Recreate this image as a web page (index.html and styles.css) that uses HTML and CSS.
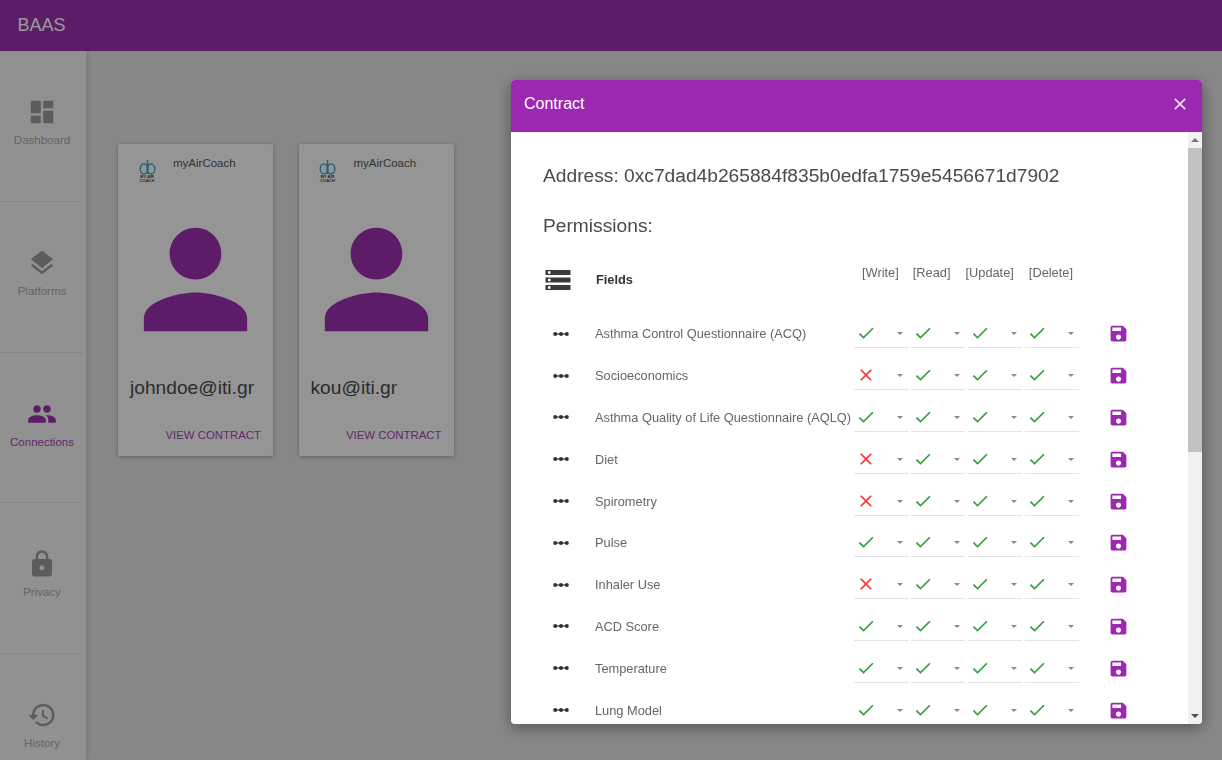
FILE: index.html
```html
<!DOCTYPE html>
<html lang="en">
<head>
  <meta charset="UTF-8" />
  <title>BAAS</title>
  <link rel="stylesheet" href="styles.css">
</head>
<body>
  <svg class="sprites" width="0" height="0">
    <symbol id="i-dashboard" viewBox="0 0 24 24"><path d="M3 13h8V3H3v10zm0 8h8v-6H3v6zm10 0h8V11h-8v10zm0-18v6h8V3h-8z"/></symbol>
    <symbol id="i-layers" viewBox="0 0 24 24"><path d="M11.99 18.54l-7.37-5.73L3 14.07l9 7 9-7-1.63-1.27-7.38 5.74zM12 16l7.36-5.73L21 9l-9-7-9 7 1.63 1.27L12 16z"/></symbol>
    <symbol id="i-people" viewBox="0 0 24 24"><path d="M16 11c1.66 0 2.99-1.34 2.99-3S17.66 5 16 5c-1.66 0-3 1.34-3 3s1.34 3 3 3zm-8 0c1.66 0 2.99-1.34 2.99-3S9.66 5 8 5C6.34 5 5 6.34 5 8s1.34 3 3 3zm0 2c-2.33 0-7 1.17-7 3.5V19h14v-2.5c0-2.33-4.67-3.5-7-3.5zm8 0c-.29 0-.62.02-.97.05 1.16.84 1.97 1.97 1.97 3.45V19h6v-2.5c0-2.33-4.67-3.5-7-3.5z"/></symbol>
    <symbol id="i-lock" viewBox="0 0 24 24"><path d="M18 8h-1V6c0-2.76-2.24-5-5-5S7 3.24 7 6v2H6c-1.1 0-2 .9-2 2v10c0 1.1.9 2 2 2h12c1.1 0 2-.9 2-2V10c0-1.1-.9-2-2-2zm-6 9c-1.1 0-2-.9-2-2s.9-2 2-2 2 .9 2 2-.9 2-2 2zm3.1-9H8.9V6c0-1.71 1.39-3.1 3.1-3.1 1.71 0 3.1 1.39 3.1 3.1v2z"/></symbol>
    <symbol id="i-history" viewBox="0 0 24 24"><path d="M13 3c-4.97 0-9 4.03-9 9H1l3.89 3.89.07.14L9 12H6c0-3.87 3.13-7 7-7s7 3.13 7 7-3.13 7-7 7c-1.93 0-3.68-.79-4.94-2.06l-1.42 1.42C8.27 19.99 10.51 21 13 21c4.97 0 9-4.03 9-9s-4.03-9-9-9zm-1 5v5l4.28 2.54.72-1.21-3.5-2.08V8H12z"/></symbol>
    <symbol id="i-person" viewBox="0 0 24 24"><path d="M12 12c2.21 0 4-1.79 4-4s-1.79-4-4-4-4 1.79-4 4 1.79 4 4 4zm0 2c-2.67 0-8 1.34-8 4v2h16v-2c0-2.66-5.33-4-8-4z"/></symbol>
    <symbol id="i-close" viewBox="0 0 24 24"><path d="M19 6.41L17.59 5 12 10.59 6.41 5 5 6.41 10.59 12 5 17.59 6.41 19 12 13.41 17.59 19 19 17.59 13.41 12z"/></symbol>
    <symbol id="i-check" viewBox="0 0 24 24"><path d="M9 16.17L4.83 12l-1.42 1.41L9 19 21 7l-1.41-1.41z"/></symbol>
    <symbol id="i-save" viewBox="0 0 24 24"><path d="M17 3H5c-1.11 0-2 .9-2 2v14c0 1.1.89 2 2 2h14c1.1 0 2-.9 2-2V7l-4-4zm-5 16c-1.66 0-3-1.34-3-3s1.34-3 3-3 3 1.34 3 3-1.34 3-3 3zm3-10H5V5h10v4z"/></symbol>
    <symbol id="i-storage" viewBox="0 0 24 24"><path d="M2 20h20v-4H2v4zm2-3h2v2H4v-2zM2 4v4h20V4H2zm4 3H4V5h2v2zm-4 7h20v-4H2v4zm2-3h2v2H4v-2z"/></symbol>
    <symbol id="i-dots" viewBox="0 0 16 4"><rect x="1" y="1.400" width="14" height="1.200"/><circle cx="2.200" cy="2" r="2"/><circle cx="8" cy="2" r="2"/><circle cx="13.800" cy="2" r="2"/></symbol>
    <symbol id="i-logo" viewBox="0 0 17 16"><ellipse cx="5" cy="10" rx="3.800" ry="5"/><ellipse cx="12" cy="10" rx="3.800" ry="5"/><path d="M8.500 1v14"/></symbol>
  </svg>

  <header class="topbar">
    <div class="brand">BAAS</div>
  </header>

  <div class="layout">
    <nav class="sidebar">
      <a class="nav-item"><svg class="nav-icon"><use href="#i-dashboard"/></svg><span>Dashboard</span></a>
      <a class="nav-item"><svg class="nav-icon"><use href="#i-layers"/></svg><span>Platforms</span></a>
      <a class="nav-item active"><svg class="nav-icon"><use href="#i-people"/></svg><span>Connections</span></a>
      <a class="nav-item"><svg class="nav-icon"><use href="#i-lock"/></svg><span>Privacy</span></a>
      <a class="nav-item"><svg class="nav-icon"><use href="#i-history"/></svg><span>History</span></a>
    </nav>

    <main class="content">
      <div class="card">
        <div class="card-head">
          <div class="logo">
            <svg class="logo-mark"><use href="#i-logo"/></svg>
            <span class="logo-text">MY AIR COACH</span>
          </div>
          <span class="card-title">myAirCoach</span>
        </div>
        <svg class="avatar"><use href="#i-person"/></svg>
        <div class="card-email">johndoe@iti.gr</div>
        <a class="card-link">VIEW CONTRACT</a>
      </div>
      <div class="card">
        <div class="card-head">
          <div class="logo">
            <svg class="logo-mark"><use href="#i-logo"/></svg>
            <span class="logo-text">MY AIR COACH</span>
          </div>
          <span class="card-title">myAirCoach</span>
        </div>
        <svg class="avatar"><use href="#i-person"/></svg>
        <div class="card-email">kou@iti.gr</div>
        <a class="card-link">VIEW CONTRACT</a>
      </div>
    </main>
  </div>

  <div class="backdrop"></div>

  <section class="modal">
    <div class="modal-head">
      <span>Contract</span>
      <svg class="modal-close"><use href="#i-close"/></svg>
    </div>
    <div class="modal-body">
      <div class="modal-scroll">
        <p class="address">Address: 0xc7dad4b265884f835b0edfa1759e5456671d7902</p>
        <p class="permissions">Permissions:</p>

        <div class="fields-head">
          <svg class="storage-icon"><use href="#i-storage"/></svg>
          <span class="fields-title">Fields</span>
          <div class="col-names">
            <span>[Write]</span><span>[Read]</span><span>[Update]</span><span>[Delete]</span>
          </div>
        </div>

        <div class="row">
          <svg class="dots"><use href="#i-dots"/></svg>
          <span class="field-name">Asthma Control Questionnaire (ACQ)</span>
          <div class="pick"><svg class="yes"><use href="#i-check"/></svg></div>
          <div class="pick"><svg class="yes"><use href="#i-check"/></svg></div>
          <div class="pick"><svg class="yes"><use href="#i-check"/></svg></div>
          <div class="pick"><svg class="yes"><use href="#i-check"/></svg></div>
          <svg class="save"><use href="#i-save"/></svg>
        </div>
        <div class="row">
          <svg class="dots"><use href="#i-dots"/></svg>
          <span class="field-name">Socioeconomics</span>
          <div class="pick"><svg class="no"><use href="#i-close"/></svg></div>
          <div class="pick"><svg class="yes"><use href="#i-check"/></svg></div>
          <div class="pick"><svg class="yes"><use href="#i-check"/></svg></div>
          <div class="pick"><svg class="yes"><use href="#i-check"/></svg></div>
          <svg class="save"><use href="#i-save"/></svg>
        </div>
        <div class="row">
          <svg class="dots"><use href="#i-dots"/></svg>
          <span class="field-name">Asthma Quality of Life Questionnaire (AQLQ)</span>
          <div class="pick"><svg class="yes"><use href="#i-check"/></svg></div>
          <div class="pick"><svg class="yes"><use href="#i-check"/></svg></div>
          <div class="pick"><svg class="yes"><use href="#i-check"/></svg></div>
          <div class="pick"><svg class="yes"><use href="#i-check"/></svg></div>
          <svg class="save"><use href="#i-save"/></svg>
        </div>
        <div class="row">
          <svg class="dots"><use href="#i-dots"/></svg>
          <span class="field-name">Diet</span>
          <div class="pick"><svg class="no"><use href="#i-close"/></svg></div>
          <div class="pick"><svg class="yes"><use href="#i-check"/></svg></div>
          <div class="pick"><svg class="yes"><use href="#i-check"/></svg></div>
          <div class="pick"><svg class="yes"><use href="#i-check"/></svg></div>
          <svg class="save"><use href="#i-save"/></svg>
        </div>
        <div class="row">
          <svg class="dots"><use href="#i-dots"/></svg>
          <span class="field-name">Spirometry</span>
          <div class="pick"><svg class="no"><use href="#i-close"/></svg></div>
          <div class="pick"><svg class="yes"><use href="#i-check"/></svg></div>
          <div class="pick"><svg class="yes"><use href="#i-check"/></svg></div>
          <div class="pick"><svg class="yes"><use href="#i-check"/></svg></div>
          <svg class="save"><use href="#i-save"/></svg>
        </div>
        <div class="row">
          <svg class="dots"><use href="#i-dots"/></svg>
          <span class="field-name">Pulse</span>
          <div class="pick"><svg class="yes"><use href="#i-check"/></svg></div>
          <div class="pick"><svg class="yes"><use href="#i-check"/></svg></div>
          <div class="pick"><svg class="yes"><use href="#i-check"/></svg></div>
          <div class="pick"><svg class="yes"><use href="#i-check"/></svg></div>
          <svg class="save"><use href="#i-save"/></svg>
        </div>
        <div class="row">
          <svg class="dots"><use href="#i-dots"/></svg>
          <span class="field-name">Inhaler Use</span>
          <div class="pick"><svg class="no"><use href="#i-close"/></svg></div>
          <div class="pick"><svg class="yes"><use href="#i-check"/></svg></div>
          <div class="pick"><svg class="yes"><use href="#i-check"/></svg></div>
          <div class="pick"><svg class="yes"><use href="#i-check"/></svg></div>
          <svg class="save"><use href="#i-save"/></svg>
        </div>
        <div class="row">
          <svg class="dots"><use href="#i-dots"/></svg>
          <span class="field-name">ACD Score</span>
          <div class="pick"><svg class="yes"><use href="#i-check"/></svg></div>
          <div class="pick"><svg class="yes"><use href="#i-check"/></svg></div>
          <div class="pick"><svg class="yes"><use href="#i-check"/></svg></div>
          <div class="pick"><svg class="yes"><use href="#i-check"/></svg></div>
          <svg class="save"><use href="#i-save"/></svg>
        </div>
        <div class="row">
          <svg class="dots"><use href="#i-dots"/></svg>
          <span class="field-name">Temperature</span>
          <div class="pick"><svg class="yes"><use href="#i-check"/></svg></div>
          <div class="pick"><svg class="yes"><use href="#i-check"/></svg></div>
          <div class="pick"><svg class="yes"><use href="#i-check"/></svg></div>
          <div class="pick"><svg class="yes"><use href="#i-check"/></svg></div>
          <svg class="save"><use href="#i-save"/></svg>
        </div>
        <div class="row">
          <svg class="dots"><use href="#i-dots"/></svg>
          <span class="field-name">Lung Model</span>
          <div class="pick"><svg class="yes"><use href="#i-check"/></svg></div>
          <div class="pick"><svg class="yes"><use href="#i-check"/></svg></div>
          <div class="pick"><svg class="yes"><use href="#i-check"/></svg></div>
          <div class="pick"><svg class="yes"><use href="#i-check"/></svg></div>
          <svg class="save"><use href="#i-save"/></svg>
        </div>
      </div>

      <div class="scrollbar">
        <span class="arrow-up"></span>
        <div class="track"><div class="thumb"></div></div>
        <span class="arrow-down"></span>
      </div>
    </div>
  </section>
</body>
</html>
```

FILE: styles.css
```css
* {
  box-sizing: border-box;
}
html, body {
  height: 100%;
}
body {
  margin: 0;
  overflow: hidden;
  font-family: "Liberation Sans", Arial, sans-serif;
  background: #e2e2e2;
  color: #444;
}
.sprites {
  position: absolute;
}

/* top bar */
.topbar {
  height: 51px;
  background: #9c2fac;
  display: flex;
}
.brand {
  width: 87px;
  padding-right: 3px;
  border-right: 1px solid #8f2ca0;
  color: #fff;
  font-size: 18px;
  line-height: 51px;
  text-align: center;
}

.layout {
  display: flex;
  height: 709px;
}

/* side menu */
.sidebar {
  width: 87px;
  flex: none;
  padding-right: 2px;
  background: #f2f2f2;
  border-right: 1px solid #ddd;
  box-shadow: 1px 0 4px rgba(0,0,0,0.15);
  overflow: hidden;
}
.nav-item {
  height: 150.8px;
  display: flex;
  flex-direction: column;
  align-items: center;
  padding-top: 46px;
  border-bottom: 1px solid #e2e2e2;
  color: #a8a8a8;
  font-size: 11.5px;
}
.nav-icon {
  width: 30px;
  height: 30px;
  margin-bottom: 7px;
  fill: #999;
}
.nav-item.active {
  color: #a544b5;
}
.nav-item.active .nav-icon {
  fill: #9c2fac;
}

/* cards */
.content {
  flex: 1;
  display: flex;
  align-items: flex-start;
  gap: 25.5px;
  padding: 93px 0 0 31px;
}
.card {
  width: 155px;
  height: 312px;
  background: #f9f9f9;
  border-radius: 2px;
  box-shadow: 0 1px 4px rgba(0,0,0,0.3);
  display: flex;
  flex-direction: column;
}
.card-head {
  height: 58px;
  display: flex;
  align-items: flex-start;
  padding: 12px 0 0 20px;
}
.logo {
  width: 18px;
  margin-top: 3px;
  display: flex;
  flex-direction: column;
  align-items: center;
}
.logo-mark {
  width: 17px;
  height: 16px;
  fill: none;
  stroke: #3aa5c8;
  stroke-width: 1.5;
}
.logo-text {
  font-size: 4px;
  line-height: 4px;
  font-weight: 700;
  text-align: center;
  color: #444;
}
.card-title {
  margin-left: 17px;
  font-size: 11.5px;
  line-height: 14px;
  color: #555;
}
.avatar {
  width: 155px;
  height: 155px;
  fill: #9c2fac;
  flex: none;
}
.card-email {
  margin: 19px 0 0 12px;
  font-size: 19.2px;
  line-height: 24px;
  color: #4a4a4a;
}
.card-link {
  margin: 28px 12px 0 0;
  align-self: flex-end;
  font-size: 11.4px;
  line-height: 14px;
  color: #a544b5;
}

.backdrop {
  position: fixed;
  inset: 0;
  background: rgba(0,0,0,0.4);
}

/* dialog */
.modal {
  position: fixed;
  left: 511px;
  top: 80px;
  width: 691px;
  height: 644px;
  background: #fff;
  border-radius: 4px;
  box-shadow: 0 4px 16px rgba(0,0,0,0.4);
  display: flex;
  flex-direction: column;
  overflow: hidden;
}
.modal-head {
  height: 52px;
  flex: none;
  background: #9c27b0;
  color: #fff;
  display: flex;
  align-items: center;
  justify-content: space-between;
  padding: 0 12px 4px 13px;
  font-size: 16px;
}
.modal-close {
  width: 20px;
  height: 20px;
  fill: #f5e6f7;
}
.modal-body {
  flex: 1;
  display: flex;
  min-height: 0;
}
.modal-scroll {
  flex: 1;
  overflow: hidden;
  padding: 0 0 0 32px;
}
.address, .permissions {
  margin: 0;
  font-size: 19.2px;
  line-height: 24px;
  color: #4a4a4a;
}
.address {
  padding-top: 32px;
}
.permissions {
  padding-top: 26px;
}
.fields-head {
  display: flex;
  align-items: center;
  height: 40px;
  margin-top: 22px;
}
.storage-icon {
  width: 30px;
  height: 30px;
  fill: #3a3a3a;
  flex: none;
}
.fields-title {
  margin: -2px 0 0 23px;
  width: 258px;
  font-size: 12.8px;
  font-weight: 700;
  color: #333;
}
.col-names {
  display: flex;
  margin-top: -15px;
  font-size: 12.8px;
  color: #666;
}
.col-names span:nth-child(1) { margin-left: 8px; }
.col-names span:nth-child(2) { margin-left: 14px; }
.col-names span:nth-child(3) { margin-left: 15px; }
.col-names span:nth-child(4) { margin-left: 15px; }

.row {
  height: 41.8px;
  display: flex;
  align-items: center;
}
.fields-head + .row {
  margin-top: 13px;
}
.dots {
  width: 16px;
  height: 4px;
  margin-left: 10px;
  fill: #333;
  flex: none;
}
.field-name {
  width: 259px;
  margin-left: 26px;
  padding-top: 1px;
  font-size: 12.8px;
  line-height: 16px;
  color: #666;
  flex: none;
  white-space: nowrap;
}
.pick {
  width: 54px;
  height: 29px;
  margin-right: 3px;
  flex: none;
  position: relative;
  display: flex;
  align-items: center;
  padding-left: 2px;
  border-bottom: 1px solid #e4e4e4;
}
.pick::after {
  content: "";
  position: absolute;
  right: 5px;
  top: 13px;
  border-left: 3.5px solid transparent;
  border-right: 3.5px solid transparent;
  border-top: 3.5px solid #8a8a8a;
}
.yes, .no {
  width: 20px;
  height: 20px;
}
.yes {
  fill: #2e9e3a;
}
.no {
  fill: #f5333a;
}
.save {
  width: 21px;
  height: 21px;
  margin-left: 26px;
  fill: #9c27b0;
  flex: none;
}

/* scrollbar */
.scrollbar {
  width: 14px;
  flex: none;
  background: #f1f1f1;
  display: flex;
  flex-direction: column;
  align-items: center;
}
.track {
  flex: 1;
  width: 100%;
  margin-top: 6px;
}
.thumb {
  height: 304px;
  background: #c1c1c1;
}
.arrow-up, .arrow-down {
  border-left: 4px solid transparent;
  border-right: 4px solid transparent;
}
.arrow-up {
  margin-top: 6px;
  border-bottom: 4px solid #777;
}
.arrow-down {
  margin-bottom: 6px;
  border-top: 4px solid #505050;
}
```
